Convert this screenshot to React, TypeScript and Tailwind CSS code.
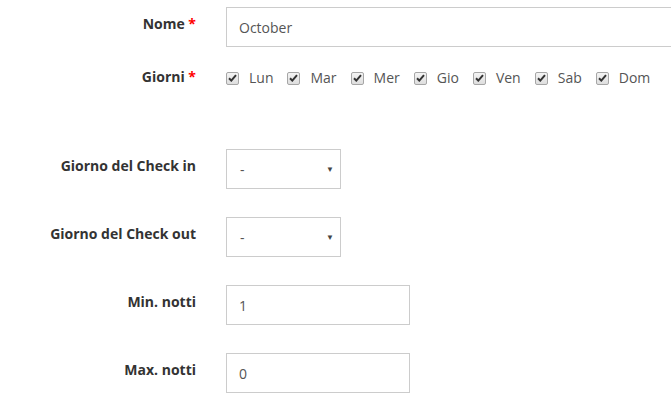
import { useState } from 'react'

const days = ['Lun', 'Mar', 'Mer', 'Gio', 'Ven', 'Sab', 'Dom']

function Label({ text, required }: { text: string; required?: boolean }) {
    return (
        <div className="w-[196px] shrink-0 pt-[7px] text-right text-[14px] leading-5 font-bold text-[#333]">
            {text}
            {required && <span className="text-[#ff0000]"> *</span>}
        </div>
    )
}

function Check({ label }: { label: string }) {
    const [on, setOn] = useState(true)
    return (
        <label className="flex items-center cursor-pointer" onClick={() => setOn(v => !v)}>
            <span className="flex h-[13px] w-[13px] items-center justify-center rounded-[2px] border border-[#a6a6a6] bg-gradient-to-b from-[#f4f4f4] to-[#dedede]">
                {on && (
                    <svg width="9" height="8" viewBox="0 0 9 8">
                        <path d="M1 4.3 L3.3 6.6 L8 1.2" fill="none" stroke="#333" strokeWidth="2" />
                    </svg>
                )}
            </span>
            <span className="ml-[10px] text-[14px] leading-5 text-[#555]">{label}</span>
        </label>
    )
}

function Select() {
    return (
        <div className="relative flex h-10 w-[115px] items-center border border-[#ccc] bg-white pl-[13px] text-[14px] text-[#555]">
            -
            <span className="absolute right-[6px] top-[15px] text-[8px] leading-none text-[#444]">▼</span>
        </div>
    )
}

export default function App() {
    return (
        <div className="min-h-[398px] w-[671px] overflow-hidden bg-white pt-[7px] font-['Open_Sans',sans-serif]">
            {/* nome */}
            <div className="flex">
                <Label text="Nome" required />
                <div className="ml-[30px] flex h-10 w-[460px] shrink-0 items-center border border-[#ccc] bg-white px-[12px] text-[14px] text-[#555]">
                    October
                </div>
            </div>

            {/* giorni */}
            <div className="mt-[13px] flex">
                <Label text="Giorni" required />
                <div className="ml-[30px] flex gap-[14px] pt-[8px]">
                    {days.map(d => (
                        <Check key={d} label={d} />
                    ))}
                </div>
            </div>

            {/* check in / out */}
            <div className="mt-[61px] flex">
                <Label text="Giorno del Check in" />
                <div className="ml-[30px]">
                    <Select />
                </div>
            </div>
            <div className="mt-[28px] flex">
                <Label text="Giorno del Check out" />
                <div className="ml-[30px]">
                    <Select />
                </div>
            </div>

            {/* notti */}
            <div className="mt-[28px] flex">
                <Label text="Min. notti" />
                <div className="ml-[30px] flex h-10 w-[184px] items-center border border-[#ccc] px-[12px] text-[14px] text-[#555]">1</div>
            </div>
            <div className="mt-[28px] flex">
                <Label text="Max. notti" />
                <div className="ml-[30px] flex h-10 w-[184px] items-center border border-[#ccc] px-[12px] text-[14px] text-[#555]">0</div>
            </div>
        </div>
    )
}
